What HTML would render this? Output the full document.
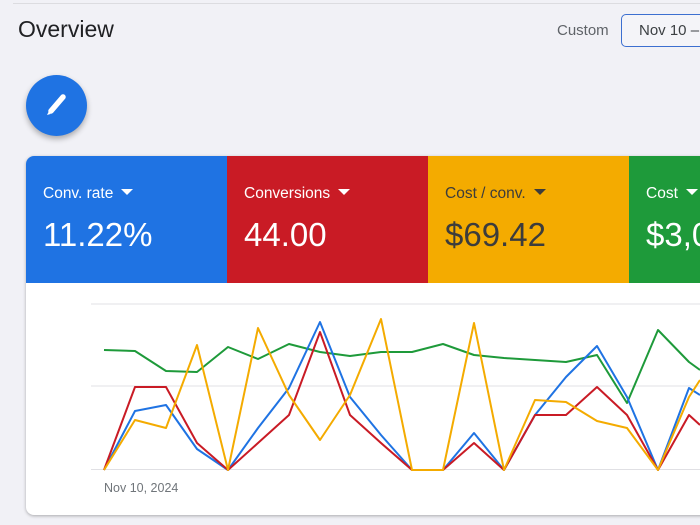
<!DOCTYPE html>
<html><head><style>
*{margin:0;padding:0;box-sizing:border-box}
body{width:700px;height:525px;overflow:hidden;background:#f1f1f6;font-family:"Liberation Sans",Arial,sans-serif;position:relative}
.topline{position:absolute;left:13px;right:0;top:3px;height:1px;background:#dcdce0}
.title{position:absolute;left:18px;top:16px;font-size:23px;color:#202124}
.custom{position:absolute;left:557px;top:22px;font-size:15px;color:#5f6368}
.date{position:absolute;left:621px;top:14px;width:100px;height:33px;border:1.5px solid #3c6fd0;border-radius:5px;font-size:15px;color:#3c4043;padding:7px 0 0 17px;background:#f4f4f8;white-space:nowrap;overflow:hidden}
.fab{position:absolute;left:26px;top:75px;width:61px;height:61px;border-radius:50%;background:#1f73e3;box-shadow:0 3px 6px rgba(0,0,0,.3)}
.card{position:absolute;left:26px;top:156px;width:700px;height:359px;background:#fff;border-radius:8px;box-shadow:0 1px 3px rgba(0,0,0,.3);overflow:hidden}
.tile{position:absolute;top:0;height:127px;color:#fff}
.tile .l{position:absolute;left:17px;top:29px;font-size:15.5px}
.tile .v{position:absolute;left:17px;top:60px;font-size:33px}
.tri{display:inline-block;width:0;height:0;border-left:6px solid transparent;border-right:6px solid transparent;border-top:6px solid currentColor;margin-left:8px;vertical-align:3px}
</style></head><body>
<div class="topline"></div>
<div class="title">Overview</div>
<div class="custom">Custom</div>
<div class="date">Nov 10 – Dec</div>
<div class="fab"><svg width="61" height="61" viewBox="0 0 61 61"><path d="M37 22 L25 36" stroke="#fff" stroke-width="5.5" stroke-linecap="round"/><path d="M22.5 37 L21 40 L24.5 39 Z" fill="#fff"/></svg></div>
<div class="card">
<div class="tile" style="left:0;width:201px;background:#1f73e3"><div class="l">Conv. rate<span class="tri"></span></div><div class="v">11.22%</div></div>
<div class="tile" style="left:201px;width:201px;background:#c91b25"><div class="l">Conversions<span class="tri"></span></div><div class="v">44.00</div></div>
<div class="tile" style="left:402px;width:201px;background:#f4ab00;color:#3c3c3c"><div class="l">Cost / conv.<span class="tri"></span></div><div class="v">$69.42</div></div>
<div class="tile" style="left:603px;width:201px;background:#1e9a3a"><div class="l">Cost<span class="tri"></span></div><div class="v">$3,054</div></div>
<div style="position:absolute;left:78px;top:325px;font-size:12.5px;color:#70757a">Nov 10, 2024</div>
</div>
<svg style="position:absolute;left:0;top:0" width="700" height="525" viewBox="0 0 700 525" fill="none" stroke-width="2" stroke-linejoin="round">
<g stroke="#e0e0e4" stroke-width="1"><line x1="91" y1="304" x2="700" y2="304"/><line x1="91" y1="386" x2="700" y2="386"/><line x1="91" y1="469.5" x2="700" y2="469.5"/></g>
<polyline stroke="#1e9a3a" points="104,350 135,351 166,371 197,372 228,347 258,359 289,344 320,352 350,356 381,352 412,352 443,344 474,355 504,358 535,360 566,362 597,355 627,403 658,330 689,362 700,370"/>
<polyline stroke="#1f73e3" points="104,470 135,411 166,405 197,449 228,470 258,428 289,388 320,322 350,397 381,435 412,470 443,470 474,433 504,470 535,415 566,377 597,346 627,397 658,470 689,388 700,395"/>
<polyline stroke="#c91b25" points="104,470 135,387 166,387 197,443 228,470 258,443 289,415 320,332 350,415 381,443 412,470 443,470 474,443 504,470 535,415 566,415 597,387 627,415 658,470 689,415 700,425"/>
<polyline stroke="#f4ab00" points="104,470 135,420 166,428 197,345 228,470 258,328 289,395 320,440 350,395 381,319 412,470 443,470 474,323 504,470 535,400 566,402 597,421 627,428 658,470 689,397 700,380"/>
</svg>
</body></html>
